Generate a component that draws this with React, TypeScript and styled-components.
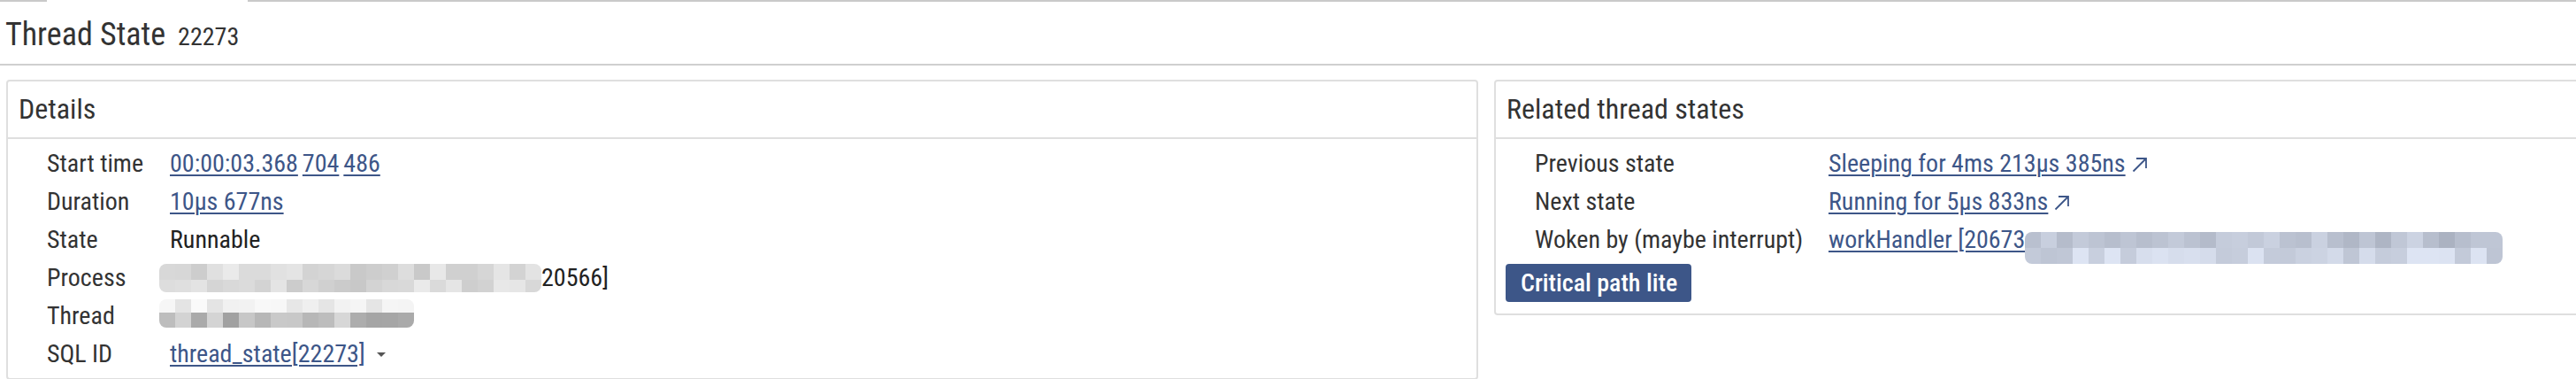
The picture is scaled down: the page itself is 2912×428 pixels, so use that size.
import React from "react";
import styled, { createGlobalStyle } from "styled-components";

const GlobalStyle = createGlobalStyle`
  html, body {
    margin: 0;
    padding: 0;
    background: #fff;
    overflow: hidden;
  }
  body {
    font-family: "Roboto Condensed", Roboto, "Liberation Sans", sans-serif;
    font-stretch: 87.5%;
    color: #333;
  }
`;

const Page = styled.div`
  width: 2912px;
`;

// thin strip left over from the tab bar above, the active tab has no bottom edge
const TabStrip = styled.div`
  display: flex;
  height: 2px;
`;

const TabEdge = styled.div<{ $width?: number; $active?: boolean }>`
  flex: ${(p) => (p.$width ? `0 0 ${p.$width}px` : "1 1 auto")};
  background: ${(p) => (p.$active ? "#fff" : "#c9c9c9")};
`;

const TitleBar = styled.div`
  display: flex;
  align-items: baseline;
  gap: 14px;
  padding: 7px 0 0 6px;
  line-height: 61px;
  border-bottom: 2px solid #cfcfcf;
`;

const Title = styled.h1`
  margin: 0;
  font-size: 36px;
  font-weight: 400;
  color: #333;
`;

const TitleId = styled.span`
  font-size: 28px;
  color: #333;
`;

const PanelRow = styled.div`
  display: flex;
  align-items: flex-start;
  gap: 18px;
  padding: 16px 0 0 7px;
`;

const Panel = styled.section<{ $width?: number }>`
  flex: ${(p) => (p.$width ? `0 0 ${p.$width}px` : "1 1 auto")};
  box-sizing: border-box;
  border: 2px solid #dfdfdf;
  border-radius: 4px;
  margin-right: ${(p) => (p.$width ? "0" : "-12px")};
`;

const PanelHeader = styled.h2`
  margin: 0;
  height: 63px;
  line-height: 63px;
  padding: 0 12px;
  font-size: 32px;
  font-weight: 400;
  color: #333;
  border-bottom: 2px solid #dfdfdf;
`;

const PanelBody = styled.div<{ $bottom: number }>`
  padding: 6px 11px ${(p) => p.$bottom}px;
`;

const InfoGrid = styled.div<{ $labelWidth: number }>`
  display: grid;
  grid-template-columns: ${(p) => p.$labelWidth}px auto;
  grid-auto-rows: 43px;
  padding-left: 33px;
  font-size: 28px;
  line-height: 43px;
  white-space: nowrap;
`;

const Label = styled.div`
  color: #333;
`;

const Value = styled.div`
  color: #222;
`;

const Link = styled.a`
  color: #3d5688;
  text-decoration: underline;
  text-decoration-thickness: 2px;
  text-underline-offset: 3px;
  cursor: pointer;
`;

const Group = styled.span`
  margin-left: 5px;
`;

const Caret = styled.span`
  display: inline-block;
  margin-left: 13px;
  width: 0;
  height: 0;
  border-left: 5px solid transparent;
  border-right: 5px solid transparent;
  border-top: 5px solid #555;
  vertical-align: 6px;
`;

const OutIcon = styled.svg`
  margin-left: 7px;
  vertical-align: -1px;
  color: #3d5688;
`;

const Mosaic = styled.span<{ $drop: number; $shift: number }>`
  display: inline-block;
  overflow: hidden;
  vertical-align: -${(p) => p.$drop}px;
  margin-left: ${(p) => p.$shift}px;
  border-radius: 8px;
  line-height: 0;
`;

const MosaicRow = styled.span<{ $h: number }>`
  display: flex;
  height: ${(p) => p.$h}px;
`;

const Tile = styled.span`
  flex: 0 0 18px;
  height: 100%;
`;

const ActionButton = styled.button`
  display: block;
  margin: 6px 0 0;
  height: 43px;
  padding: 0 16px 0 17px;
  border: none;
  border-radius: 4px;
  background: #3d5688;
  color: #fff;
  font: inherit;
  font-size: 28px;
  font-weight: 500;
  line-height: 43px;
  cursor: pointer;
`;

const noise = (seed: number) => {
  const x = Math.sin(seed * 12.9898 + 78.233) * 43758.5453;
  return x - Math.floor(x);
};

type Tint = "gray" | "blue";

const tileColor = (seed: number, min: number, max: number, tint: Tint) => {
  const v = Math.round(min + noise(seed) * (max - min));
  if (tint === "gray") return `rgb(${v},${v},${v})`;
  const c = (n: number) => Math.max(0, Math.min(255, n));
  return `rgb(${c(v - 16)},${c(v - 9)},${c(v + 6)})`;
};

type MosaicRowSpec = { h: number; min: number; max: number };

const Redacted = ({
  cols,
  rows,
  tint,
  drop,
  shift = 0,
  seed,
}: {
  cols: number;
  rows: MosaicRowSpec[];
  tint: Tint;
  drop: number;
  shift?: number;
  seed: number;
}) => (
  <Mosaic $drop={drop} $shift={shift} style={{ width: cols * 18 }}>
    {rows.map((r, ri) => (
      <MosaicRow key={ri} $h={r.h}>
        {Array.from({ length: cols }, (_, ci) => (
          <Tile
            key={ci}
            style={{ background: tileColor(seed + ri * 97 + ci * 13, r.min, r.max, tint) }}
          />
        ))}
      </MosaicRow>
    ))}
  </Mosaic>
);

const Outward = () => (
  <OutIcon width="18" height="18" viewBox="0 0 18 18" fill="none">
    <path d="M1.5 16.5 L16 2 M5 2 H16 V13" stroke="currentColor" strokeWidth="1.8" />
  </OutIcon>
);

const App = () => {
  return (
    <Page>
      <GlobalStyle />
      <TabStrip>
        <TabEdge $width={53} />
        <TabEdge $width={227} $active />
        <TabEdge />
      </TabStrip>
      <TitleBar>
        <Title>Thread State</Title>
        <TitleId>22273</TitleId>
      </TitleBar>
      <PanelRow>
        <Panel $width={1664}>
          <PanelHeader>Details</PanelHeader>
          <PanelBody $bottom={6}>
            <InfoGrid $labelWidth={139}>
              <Label>Start time</Label>
              <Value>
                <Link>00:00:03.368</Link>
                <Group>
                  <Link>704</Link>
                </Group>
                <Group>
                  <Link>486</Link>
                </Group>
              </Value>
              <Label>Duration</Label>
              <Value>
                <Link>10µs 677ns</Link>
              </Value>
              <Label>State</Label>
              <Value>Runnable</Value>
              <Label>Process</Label>
              <Value>
                <Redacted
                  cols={24}
                  shift={-12}
                  drop={7}
                  tint="gray"
                  seed={3}
                  rows={[
                    { h: 18, min: 198, max: 238 },
                    { h: 14, min: 200, max: 236 },
                  ]}
                />
                20566]
              </Value>
              <Label>Thread</Label>
              <Value>
                <Redacted
                  cols={16}
                  shift={-12}
                  drop={4}
                  tint="gray"
                  seed={41}
                  rows={[
                    { h: 15, min: 226, max: 250 },
                    { h: 17, min: 160, max: 215 },
                  ]}
                />
              </Value>
              <Label>SQL ID</Label>
              <Value>
                <Link>thread_state[22273]</Link>
                <Caret />
              </Value>
            </InfoGrid>
          </PanelBody>
        </Panel>
        <Panel>
          <PanelHeader>Related thread states</PanelHeader>
          <PanelBody $bottom={13}>
            <InfoGrid $labelWidth={332}>
              <Label>Previous state</Label>
              <Value>
                <Link>Sleeping for 4ms 213µs 385ns</Link>
                <Outward />
              </Value>
              <Label>Next state</Label>
              <Value>
                <Link>Running for 5µs 833ns</Link>
                <Outward />
              </Value>
              <Label>Woken by (maybe interrupt)</Label>
              <Value>
                <Link>workHandler [20673</Link>
                <Redacted
                  cols={30}
                  drop={18}
                  tint="blue"
                  seed={7}
                  rows={[
                    { h: 18, min: 180, max: 222 },
                    { h: 18, min: 205, max: 238 },
                  ]}
                />
              </Value>
            </InfoGrid>
            <ActionButton>Critical path lite</ActionButton>
          </PanelBody>
        </Panel>
      </PanelRow>
    </Page>
  );
};

export default App;
